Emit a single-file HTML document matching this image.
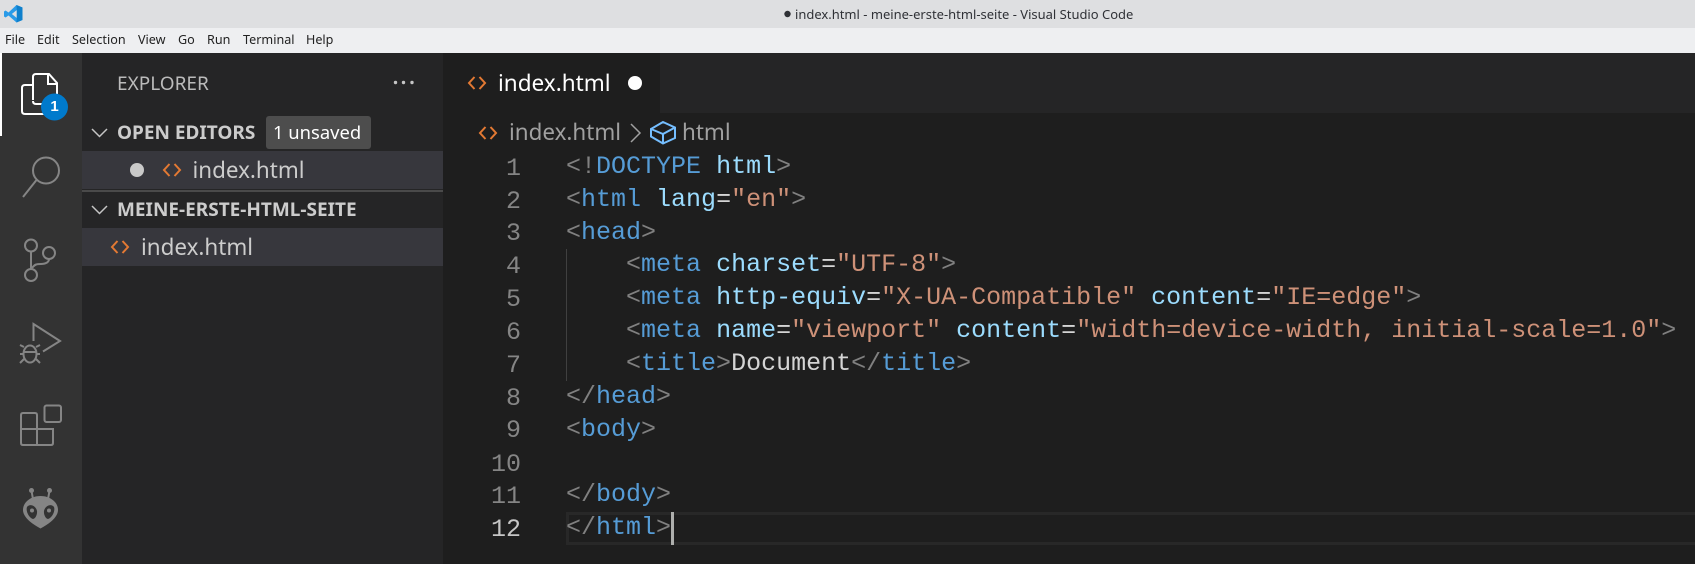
<!DOCTYPE html>
<html lang="en"><head><meta charset="utf-8"><title>VS Code</title>
<style>
html,body{margin:0;padding:0;width:1695px;height:564px;overflow:hidden;background:#1e1e1e}
.a{position:absolute;white-space:pre}
.s{font-family:"Noto Sans","Open Sans","Noto Sans CJK JP","DejaVu Sans",sans-serif}
.m{font-family:"Liberation Mono",monospace;font-size:25px;line-height:33px}
.menu{top:30px;font-size:12.6px;line-height:20px;color:#222}
.b{font-weight:700;font-size:19px;line-height:24px;color:#cccccc}
.f{font-size:22.4px;line-height:30px;color:#cccccc}
.n{left:470px;width:51px;text-align:right;color:#858585}
.c{left:566px}
i{font-style:normal;color:#808080}
u{text-decoration:none;color:#569cd6}
b{font-weight:400;color:#9cdcfe}
em{font-style:normal;color:#ce9178}
svg{position:absolute;overflow:visible}
</style></head><body>
<div class="a" style="left:0;top:0;width:1695px;height:28px;background:#dedfe1"></div>
<div class="a" style="left:0;top:28px;width:1695px;height:25px;background:#eeeff1"></div>
<div class="a" style="left:0;top:53px;width:82px;height:511px;background:#333333"></div>
<div class="a" style="left:0;top:53px;width:2px;height:83px;background:#ffffff"></div>
<div class="a" style="left:82px;top:53px;width:361px;height:511px;background:#252526"></div>
<div class="a" style="left:443px;top:53px;width:1252px;height:60px;background:#252526"></div>
<div class="a" style="left:443px;top:53px;width:217px;height:60px;background:#1e1e1e"></div>

<svg style="left:0;top:0" width="30" height="28" viewBox="0 0 30 28"><path d="M16.5 5 L22.500 7.500 V20 L16.5 22.500 L8.500 15.500 L5.600 17.500 L4 16.500 V11.500 L5.600 10.500 L8.500 12.500 Z" fill="#2a9be8"/><path d="M16.8 10 L11.8 14 L16.8 18 Z" fill="#dedfe1"/><path d="M16.5 5 L22.500 7.500 V20 L16.5 22.500 L16.800 18 V10 Z" fill="#0f80cc"/></svg>
<svg style="left:784px;top:10px" width="8" height="8"><circle cx="3.500" cy="4" r="3.200" fill="#2f3136"/></svg>
<div class="a s" style="left:795px;top:4px;font-size:12.97px;line-height:20px;color:#2f3136">index.html - meine-erste-html-seite - Visual Studio Code</div>
<div class="a s menu" style="left:5px">File</div>
<div class="a s menu" style="left:37px">Edit</div>
<div class="a s menu" style="left:72px">Selection</div>
<div class="a s menu" style="left:138px">View</div>
<div class="a s menu" style="left:178px">Go</div>
<div class="a s menu" style="left:207px">Run</div>
<div class="a s menu" style="left:243px">Terminal</div>
<div class="a s menu" style="left:306px">Help</div>

<svg style="left:0;top:53px" width="82" height="511" viewBox="0 53 82 511" fill="none" stroke-width="2">
<path d="M33 100 V77 Q33 74 36 74 H49 L57 83 V101 Q57 104 54 104 H36 Q33 104 33 101" stroke="#fff"/>
<path d="M48 74 V84 H57" stroke="#fff"/>
<path d="M33 85 H25 Q22 85 22 88 V111 Q22 114 25 114 H44 Q46 114 46 112 V104" stroke="#fff"/>
<circle cx="54.5" cy="107" r="13.5" fill="#007acc"/>
<g stroke="#858585">
<circle cx="46" cy="170.5" r="13"/><path d="M36.5 180 L23 197"/>
<circle cx="31" cy="245.5" r="6"/><circle cx="49" cy="253" r="6"/><circle cx="31" cy="275" r="6"/>
<path d="M31 251.500 V269 M32 268 C35 264 37 264 41 264 C46 264 49 262 49 259"/>
<path d="M33.5 341 V324 L60 341 L43 351.5"/>
<ellipse cx="30" cy="354" rx="6.5" ry="8.5"/><path d="M24 352 H36 M24 347 L20 345 M36 347 L40 345 M20 354 H24 M36 354 H40 M24 359 L20 363 M36 359 L40 363"/>
<rect x="44.5" y="405.5" width="16.5" height="16.5" rx="2"/>
<path d="M37 429 V415 Q37 413 35 413 H23 Q21 413 21 415 V443 Q21 445 23 445 H51 Q53 445 53 443 V429 H21 M37 429 V445"/>
<path d="M31.5 491 L33 499 M49.5 491 L48 499"/>
</g>
<circle cx="31.5" cy="490.5" r="2.5" fill="#858585"/><circle cx="49.5" cy="490.5" r="2.5" fill="#858585"/>
<path d="M40.5 496 C50 496 58 502 58 510 C58 518 47 525 40.5 528.5 C34 525 23 518 23 510 C23 502 31 496 40.5 496 Z" fill="#858585"/>
<path d="M27 507 C30 503 36 506 37 511 C37.500 515 35 519 33 519 C29 518 25.500 511 27 507 Z M54 507 C51 503 45 506 44 511 C43.500 515 46 519 48 519 C52 518 55.500 511 54 507 Z" fill="#333"/>
<circle cx="32" cy="510.500" r="2" fill="#858585"/><circle cx="49" cy="510.500" r="2" fill="#858585"/>
</svg>
<div class="a" style="left:41px;top:96px;width:27px;text-align:center;font:700 15px/22px 'Liberation Sans',sans-serif;color:#fff">1</div>

<div class="a s" style="left:117px;top:70px;font-size:19px;line-height:26px;color:#bbbbbb">EXPLORER</div>
<svg style="left:393px;top:80px" width="22" height="5"><circle cx="2.500" cy="2.500" r="1.700" fill="#c5c5c5"/><circle cx="10.500" cy="2.500" r="1.700" fill="#c5c5c5"/><circle cx="19" cy="2.500" r="1.700" fill="#c5c5c5"/></svg>

<svg style="left:91px;top:127px" width="18" height="12" fill="none" stroke="#c5c5c5" stroke-width="1.500"><path d="M1 2 L8.500 9.500 L16 2"/></svg>
<div class="a s b" style="left:117px;top:120px">OPEN EDITORS</div>
<div class="a" style="left:266px;top:116px;width:105px;height:33px;border-radius:3px;background:#4d4d4d"></div>
<div class="a s" style="left:273px;top:118px;font-size:18.4px;line-height:29px;color:#ffffff">1 unsaved</div>
<div class="a" style="left:82px;top:151px;width:361px;height:38px;background:#37373d"></div>
<svg style="left:130px;top:163px" width="14" height="14"><circle cx="7" cy="7" r="7" fill="#c9c9c9"/></svg>
<svg style="left:163px;top:163px" width="18" height="14" fill="none" stroke="#e37933" stroke-width="2"><path d="M6.500 1 L1 7 L6.500 13 M11.500 1 L17 7 L11.500 13"/></svg>
<div class="a s f" style="left:192.500px;top:155px">index.html</div>
<div class="a" style="left:82px;top:190px;width:361px;height:2px;background:#4a4a4a"></div>
<svg style="left:91px;top:204px" width="18" height="12" fill="none" stroke="#c5c5c5" stroke-width="1.500"><path d="M1 2 L8.500 9.500 L16 2"/></svg>
<div class="a s b" style="left:117px;top:197px">MEINE-ERSTE-HTML-SEITE</div>
<div class="a" style="left:82px;top:228px;width:361px;height:38px;background:#37373d"></div>
<svg style="left:111px;top:240px" width="18" height="14" fill="none" stroke="#e37933" stroke-width="2"><path d="M6.500 1 L1 7 L6.500 13 M11.500 1 L17 7 L11.500 13"/></svg>
<div class="a s f" style="left:141px;top:232px">index.html</div>

<svg style="left:468px;top:76px" width="18" height="14" fill="none" stroke="#e37933" stroke-width="2"><path d="M6.500 1 L1 7 L6.500 13 M11.500 1 L17 7 L11.500 13"/></svg>
<div class="a s" style="left:498px;top:68px;font-size:22.5px;line-height:30px;color:#ffffff">index.html</div>
<svg style="left:628px;top:76px" width="14" height="14"><circle cx="7" cy="7" r="7" fill="#ffffff"/></svg>

<svg style="left:479px;top:126px" width="18" height="14" fill="none" stroke="#e37933" stroke-width="2"><path d="M6.500 1 L1 7 L6.500 13 M11.500 1 L17 7 L11.500 13"/></svg>
<div class="a s" style="left:509px;top:117px;font-size:22.4px;line-height:30px;color:#a0a0a0">index.html</div>
<svg style="left:630px;top:123px" width="12" height="20" fill="none" stroke="#a0a0a0" stroke-width="1.500"><path d="M1 1 L10 10 L1 19"/></svg>
<svg style="left:650px;top:121px" width="26" height="24" fill="none" stroke="#75beff" stroke-width="2"><path d="M13 1 L25 6.500 V17 L13 22.500 L1 15.500 V8 Z M1 8 L13 13 L25 6.500 M13 13 V22.500"/></svg>
<div class="a s" style="left:682px;top:117px;font-size:22.4px;line-height:30px;color:#a0a0a0">html</div>

<div class="a" style="left:566px;top:249px;width:1px;height:132px;background:#404040"></div>
<div class="a" style="left:566px;top:512px;width:1129px;height:33px;box-sizing:border-box;border:3px solid #282828;border-right:0"></div>

<div class="a m n" style="top:152px">1</div>
<div class="a m n" style="top:185px">2</div>
<div class="a m n" style="top:217px">3</div>
<div class="a m n" style="top:250px">4</div>
<div class="a m n" style="top:283px">5</div>
<div class="a m n" style="top:316px">6</div>
<div class="a m n" style="top:349px">7</div>
<div class="a m n" style="top:382px">8</div>
<div class="a m n" style="top:414px">9</div>
<div class="a m n" style="top:448px">10</div>
<div class="a m n" style="top:480px">11</div>
<div class="a m n" style="top:513px;color:#c6c6c6">12</div>

<div class="a m c" style="top:150px"><i>&lt;!</i><u>DOCTYPE</u> <b>html</b><i>&gt;</i></div>
<div class="a m c" style="top:183px"><i>&lt;</i><u>html</u> <b>lang</b><span style="color:#d4d4d4">=</span><em>"en"</em><i>&gt;</i></div>
<div class="a m c" style="top:216px"><i>&lt;</i><u>head</u><i>&gt;</i></div>
<div class="a m c" style="top:248px">    <i>&lt;</i><u>meta</u> <b>charset</b><span style="color:#d4d4d4">=</span><em>"UTF-8"</em><i>&gt;</i></div>
<div class="a m c" style="top:281px">    <i>&lt;</i><u>meta</u> <b>http-equiv</b><span style="color:#d4d4d4">=</span><em>"X-UA-Compatible"</em> <b>content</b><span style="color:#d4d4d4">=</span><em>"IE=edge"</em><i>&gt;</i></div>
<div class="a m c" style="top:314px">    <i>&lt;</i><u>meta</u> <b>name</b><span style="color:#d4d4d4">=</span><em>"viewport"</em> <b>content</b><span style="color:#d4d4d4">=</span><em>"width=device-width, initial-scale=1.0"</em><i>&gt;</i></div>
<div class="a m c" style="top:347px">    <i>&lt;</i><u>title</u><i>&gt;</i><span style="color:#d4d4d4">Document</span><i>&lt;/</i><u>title</u><i>&gt;</i></div>
<div class="a m c" style="top:380px"><i>&lt;/</i><u>head</u><i>&gt;</i></div>
<div class="a m c" style="top:413px"><i>&lt;</i><u>body</u><i>&gt;</i></div>
<div class="a m c" style="top:478px"><i>&lt;/</i><u>body</u><i>&gt;</i></div>
<div class="a m c" style="top:511px"><i>&lt;/</i><u>html</u><i>&gt;</i></div>
<div class="a" style="left:671px;top:512px;width:3px;height:33px;background:#aeafad"></div>
</body></html>
